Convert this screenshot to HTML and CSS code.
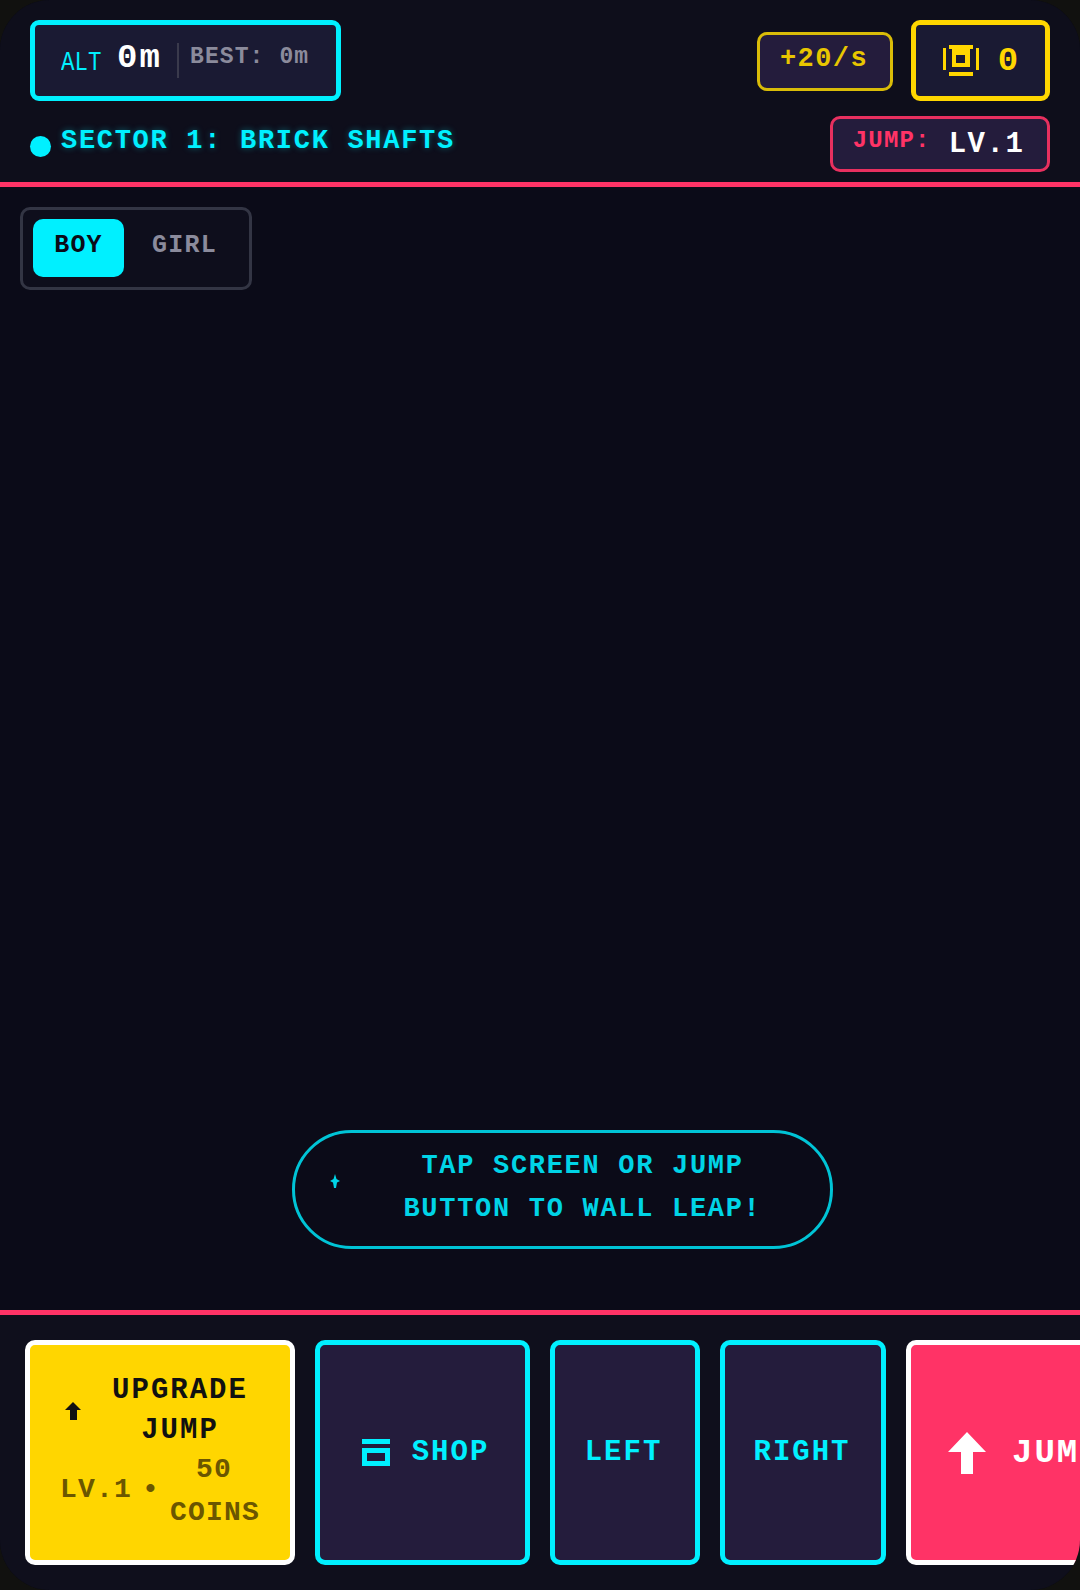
FILE: index.html
```html
<!DOCTYPE html>
<html lang="en">
<head>
  <meta charset="UTF-8" />
  <title>Wall Leap</title>
  <link rel="stylesheet" href="styles.css">
</head>
<body>
  <div class="screen">

    <header class="hud">
      <div class="hud-row">
        <div class="alt-box">
          <span class="alt-label">ALT</span>
          <span class="alt-value">0m</span>
          <span class="alt-best">BEST: 0m</span>
        </div>
        <div class="rate-box">+20/s</div>
        <div class="coin-box">
          <svg class="coin-icon" width="37" height="31" viewBox="0 0 37 31">
            <path fill="#ffd600" d="M0 3h3v22H0zM33 3h3v22h-3zM6 0h24v4h-3v18H9V4H6zM6 27h24v4H6z"/>
            <rect x="13" y="10" width="9" height="8" fill="#1a1a33"/>
          </svg>
          <span class="coin-value">0</span>
        </div>
      </div>
      <div class="hud-row">
        <div class="sector"><span class="sector-dot"></span>SECTOR 1: BRICK SHAFTS</div>
        <div class="jump-badge">
          <span class="jump-label">JUMP:</span>
          <span class="jump-level">LV.1</span>
        </div>
      </div>
    </header>

    <main class="game">
      <div class="toggle">
        <button class="toggle-btn active">BOY</button>
        <button class="toggle-btn">GIRL</button>
      </div>
      <div class="hint">
        <svg class="hint-icon" width="10" height="14" viewBox="0 0 10 14">
          <path fill="#00d4e6" d="M5 0l1.500 5L10 7 7 8.500 6 14H4L3 8.500 0 7l3.500-2z"/>
        </svg>
        <p class="hint-text">TAP SCREEN OR JUMP<br>BUTTON TO WALL LEAP!</p>
      </div>
    </main>

    <footer class="controls">
      <button class="ctrl ctrl-upgrade">
        <span class="upgrade-top">
          <svg class="upgrade-icon" width="16" height="18" viewBox="0 0 16 18">
            <path fill="#111" d="M8 0l8 8h-4v10H5V8H0z"/>
          </svg>
          <span class="upgrade-title">UPGRADE JUMP</span>
        </span>
        <span class="upgrade-sub">
          <span class="upgrade-level">LV.1 •</span>
          <span class="upgrade-cost">50 COINS</span>
        </span>
      </button>
      <button class="ctrl ctrl-shop">
        <svg width="28" height="27" viewBox="0 0 28 27">
          <path fill="#00f0ff" d="M0 0h28v5H0zM0 9h28v18H0zM5 14v8h18v-8z" fill-rule="evenodd"/>
        </svg>
        SHOP
      </button>
      <button class="ctrl ctrl-left">LEFT</button>
      <button class="ctrl ctrl-right">RIGHT</button>
      <button class="ctrl ctrl-jump">
        <svg width="38" height="42" viewBox="0 0 38 42">
          <path fill="#fff" d="M19 0l19 20H25v22H13V20H0z"/>
        </svg>
        JUMP
      </button>
    </footer>

  </div>
</body>
</html>
```

FILE: styles.css
```css
* { box-sizing: border-box; }
html, body {
  margin: 0;
  background-color: #11110f;
}
body {
  font-family: "Liberation Mono", monospace;
  font-weight: bold;
  color: white;
}
.screen {
  width: 1080px;
  height: 1590px;
  display: flex;
  flex-direction: column;
  border-radius: 50px;
  overflow: hidden;
  background-color: #0b0b18;
}

/* top bar */
.hud {
  height: 187px;
  flex-shrink: 0;
  padding: 20px 30px 0;
  display: flex;
  flex-direction: column;
  gap: 15px;
  background-color: #0e0e1b;
  border-bottom: 5px solid #ff3366;
}
.hud-row {
  display: flex;
  align-items: center;
  gap: 18px;
}
.alt-box {
  width: 311px;
  height: 81px;
  display: flex;
  align-items: center;
  padding: 0 26px;
  background-color: #1a1a33;
  border: 5px solid #00f0ff;
  border-radius: 9px;
}
.alt-label {
  width: 56px;
  padding-top: 4px;
  font-size: 28px;
  font-weight: normal;
  color: #00f0ff;
  transform: scaleX(0.8);
  transform-origin: left center;
}
.alt-value {
  width: 60px;
  padding-bottom: 6px;
  font-size: 34px;
  line-height: 34px;
  letter-spacing: 2px;
}
.alt-best {
  height: 35px;
  padding-left: 11px;
  border-left: 2px solid #3a3a4c;
  font-size: 23px;
  line-height: 28px;
  letter-spacing: 1.1px;
  color: #8b8b9c;
}
.rate-box {
  width: 136px;
  height: 59px;
  margin-top: 1px;
  margin-left: auto;
  padding: 9px 2px 0 0;
  text-align: center;
  font-size: 27px;
  line-height: 30px;
  letter-spacing: 1.4px;
  color: #e8c600;
  background-color: #241c3c;
  border: 3px solid #d9bc08;
  border-radius: 10px;
}
.coin-box {
  width: 139px;
  height: 81px;
  display: flex;
  align-items: center;
  justify-content: center;
  gap: 18px;
  background-color: #1a1a33;
  border: 5px solid #ffd600;
  border-radius: 9px;
}
.coin-icon { flex-shrink: 0; }
.coin-value {
  font-size: 34px;
  color: #ffd600;
}
.sector {
  display: flex;
  align-items: center;
  gap: 10px;
  margin-bottom: 6px;
  font-size: 27px;
  letter-spacing: 1.7px;
  color: #00f0ff;
  text-shadow: 0 0 6px rgba(0, 240, 255, 0.35);
}
.sector-dot {
  width: 21px;
  height: 21px;
  margin-top: 11px;
  border-radius: 50%;
  background-color: #00f0ff;
}
.jump-badge {
  width: 220px;
  height: 56px;
  margin-left: auto;
  display: flex;
  align-items: center;
  justify-content: center;
  gap: 18px;
  padding-right: 3px;
  background-color: #241c3c;
  border: 3px solid #e8305f;
  border-radius: 10px;
}
.jump-label {
  padding-bottom: 7px;
  font-size: 24px;
  letter-spacing: 1.2px;
  color: #ff3366;
}
.jump-level {
  font-size: 29px;
  letter-spacing: 1.5px;
}

/* play area */
.game {
  flex: 1;
  display: flex;
  flex-direction: column;
  justify-content: space-between;
  padding: 20px 20px 61px;
}
button {
  font-family: inherit;
  font-weight: bold;
}
.toggle {
  width: 232px;
  height: 83px;
  display: flex;
  gap: 15px;
  padding: 9px 10px;
  border: 3px solid #333544;
  border-radius: 10px;
  background-color: #0e0e1c;
}
.toggle-btn {
  width: 91px;
  height: 58px;
  padding: 0 0 6px;
  border: none;
  border-radius: 10px;
  background: none;
  font-size: 25px;
  letter-spacing: 1.2px;
  color: #8b8b9c;
}
.toggle-btn.active {
  background-color: #00f0ff;
  color: #0b0b18;
}
.hint {
  width: 541px;
  height: 119px;
  margin-left: 272px;
  display: flex;
  align-items: center;
  padding: 0 36px 0 35px;
  border: 3px solid #00c4d6;
  border-radius: 60px;
}
.hint-icon {
  flex-shrink: 0;
  margin-bottom: 18px;
}
.hint-text {
  flex: 1;
  margin: 0 0 4px 31px;
  text-align: center;
  font-size: 27px;
  line-height: 43px;
  letter-spacing: 1.7px;
  color: #00d4e6;
}

/* bottom controls */
.controls {
  height: 280px;
  flex-shrink: 0;
  display: flex;
  gap: 20px;
  padding: 25px;
  overflow: hidden;
  background-color: #0f0f1c;
  border-top: 5px solid #ff3366;
}
.ctrl {
  height: 225px;
  flex-shrink: 0;
  display: flex;
  align-items: center;
  justify-content: center;
  padding: 0;
  font-size: 29px;
  letter-spacing: 2px;
  color: #00f0ff;
  background-color: #241c3c;
  border: 5px solid #00f0ff;
  border-radius: 10px;
}
.ctrl-upgrade {
  width: 270px;
  flex-direction: column;
  align-items: stretch;
  padding: 0 30px;
  color: #111;
  background-color: #ffd600;
  border-color: white;
}
.upgrade-top {
  display: flex;
  align-items: center;
}
.upgrade-icon {
  flex-shrink: 0;
  margin-left: 5px;
}
.upgrade-title {
  flex: 1;
  margin-left: 19px;
  text-align: center;
  line-height: 40px;
}
.upgrade-sub {
  display: flex;
  align-items: center;
  gap: 10px;
  margin-top: -3px;
  font-size: 28px;
  line-height: 43px;
  letter-spacing: 1.2px;
  color: #6b5600;
}
.upgrade-level {
  padding-bottom: 4px;
  white-space: nowrap;
  word-spacing: -8px;
}
.upgrade-cost {
  width: 88px;
  text-align: center;
}
.ctrl-shop {
  width: 215px;
  gap: 22px;
  padding-left: 6px;
}
.ctrl-left {
  width: 150px;
  padding-right: 3px;
}
.ctrl-right {
  width: 166px;
  padding-right: 2px;
}
.ctrl-jump {
  width: 290px;
  gap: 26px;
  justify-content: flex-start;
  padding-left: 37px;
  font-size: 34px;
  color: white;
  background-color: #ff3366;
  border-color: white;
}
```
